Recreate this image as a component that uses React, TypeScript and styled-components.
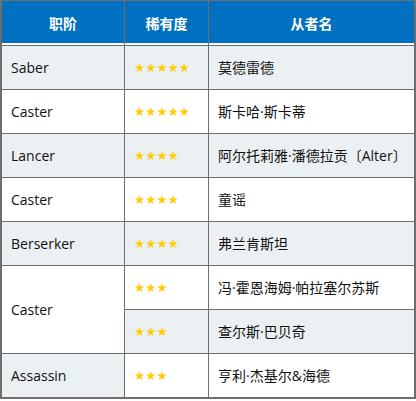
import styled, { createGlobalStyle } from "styled-components";

const GlobalStyle = createGlobalStyle`
  html, body {
    margin: 0;
    padding: 0;
    background: #ffffff;
  }
  body {
    font-family: "Open Sans", "Noto Sans CJK SC", sans-serif;
    font-size: 14px;
    color: #111;
  }
`;

const Table = styled.table`
  width: 414px;
  border-collapse: collapse;
  table-layout: fixed;
  border-left: 2px solid #6e6e6e;
  border-top: 1px solid #6e6e6e;
  border-right: 2px solid #6e6e6e;
  border-bottom: 2px solid #6e6e6e;
`;

const HeadCell = styled.th<{ $w: number }>`
  width: ${(p) => p.$w}px;
  height: 44px;
  padding: 0;
  background: #0070c0;
  color: #ffffff;
  font-weight: 700;
  font-size: 14px;
  text-align: center;
  border: 1px solid #6e6e6e;
  box-shadow: inset 0 -2px 0 #ffffff;
`;

const Cell = styled.td<{ $shade?: boolean }>`
  height: 43px;
  padding: 0 0 0 9px;
  background: ${(p) => (p.$shade ? "#ebf0f2" : "#ffffff")};
  border: 1px solid #6e6e6e;
  vertical-align: middle;
  white-space: nowrap;
  overflow: hidden;
  line-height: 20px;
`;

const Stars = styled.span`
  color: #ffcc00;
  font-family: "DejaVu Sans", sans-serif;
  font-size: 12.5px;
  letter-spacing: 0;
`;

type Row = {
  cls?: string;
  span?: number;
  clsShade?: boolean;
  stars: number;
  name: string;
  shade: boolean;
};

const rows: Row[] = [
  { cls: "Saber", clsShade: true, stars: 5, name: "莫德雷德", shade: true },
  { cls: "Caster", clsShade: false, stars: 5, name: "斯卡哈·斯卡蒂", shade: false },
  { cls: "Lancer", clsShade: true, stars: 4, name: "阿尔托莉雅·潘德拉贡〔Alter〕", shade: true },
  { cls: "Caster", clsShade: false, stars: 4, name: "童谣", shade: false },
  { cls: "Berserker", clsShade: true, stars: 4, name: "弗兰肯斯坦", shade: true },
  { cls: "Caster", span: 2, clsShade: false, stars: 3, name: "冯·霍恩海姆·帕拉塞尔苏斯", shade: false },
  { stars: 3, name: "查尔斯·巴贝奇", shade: true },
  { cls: "Assassin", clsShade: true, stars: 3, name: "亨利·杰基尔&海德", shade: false },
];

const App = () => {
  return (
    <>
      <GlobalStyle />
      <Table>
        <thead>
          <tr>
            <HeadCell $w={122}>职阶</HeadCell>
            <HeadCell $w={83}>稀有度</HeadCell>
            <HeadCell $w={205}>从者名</HeadCell>
          </tr>
        </thead>
        <tbody>
          {rows.map((r, i) => (
            <tr key={i}>
              {r.cls && (
                <Cell $shade={r.clsShade} rowSpan={r.span}>
                  {r.cls}
                </Cell>
              )}
              <Cell $shade={r.shade}>
                <Stars>{"★".repeat(r.stars)}</Stars>
              </Cell>
              <Cell $shade={r.shade}>{r.name}</Cell>
            </tr>
          ))}
        </tbody>
      </Table>
    </>
  );
};

export default App;
